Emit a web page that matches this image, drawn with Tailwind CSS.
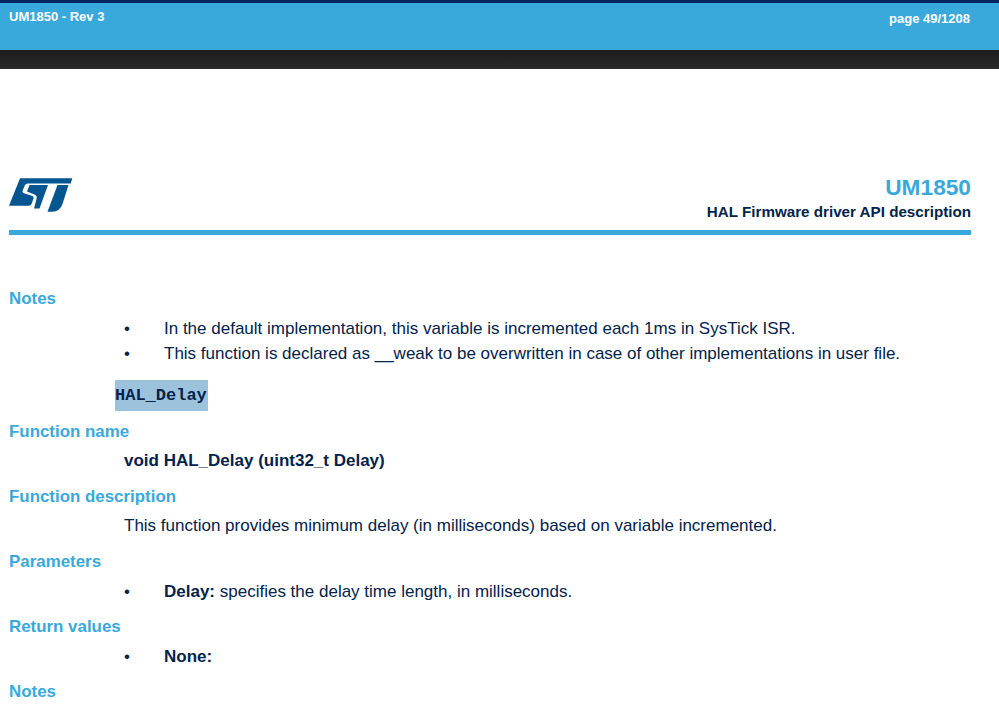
<!DOCTYPE html>
<html lang="en">
<head>
    <meta charset="UTF-8">
    <title>UM1850 - page 49</title>
    <script src="https://cdn.jsdelivr.net/npm/@tailwindcss/browser@4"></script>
</head>
<body class="bg-white font-['Liberation_Sans',Arial,sans-serif] text-[#03234b] overflow-hidden h-[710px]">

    <!-- Viewer header -->
    <header>
        <div class="h-[3px] bg-[#03265e]"></div>
        <div class="h-[47px] bg-[#39a9dc] flex justify-between items-start pt-[7px] pl-[9px] pr-[29px] text-white text-[13px] font-bold leading-[14px]">
            <span>UM1850 - Rev 3</span>
            <span class="mt-[2px]">page 49/1208</span>
        </div>
        <div class="h-[19px] bg-gradient-to-b from-[#1c1c1c] to-[#2b2b2b]"></div>
    </header>

    <!-- Page -->
    <main class="pl-[9px] pr-[28px]">
        <div class="flex justify-between items-start mt-[106px] h-[55px]">
            <svg class="w-[64px] h-[34px] mt-[3px]" viewBox="9 178 64 34">
                <path fill="#03568f" d="M20 178.3H72.3L70.7 183.6H28Q25.5 183.6 24.5 186L22.5 191Q22 192.5 24 193.2L32.5 196Q34 196.5 33.5 198.5L31.5 204Q31 205.7 28.5 205.7H9Z"/>
                <path fill="#03568f" d="M29.5 185H48L39.5 208.5H34L36.5 199Q37.5 195.5 34.5 194.5L27 191.5Z"/>
                <path fill="#03568f" d="M57.5 185H68.5L62.5 204Q60 211.5 52 211.7H47.5Z"/>
            </svg>
            <div class="text-right">
                <div class="text-[22.7px] leading-[24px] font-bold text-[#39a9dc]">UM1850</div>
                <div class="text-[15.2px] leading-[18px] font-bold mt-[4px]">HAL Firmware driver API description</div>
            </div>
        </div>
        <div class="h-[5px] bg-[#39a9dc]"></div>

        <section class="mt-[54px]">
            <h2 class="text-[16.9px] leading-5 font-bold text-[#39a9dc]">Notes</h2>
            <ul class="mt-[7px] ml-[115px] text-[17px] leading-[25px]">
                <li class="flex"><span class="w-[40px]">•</span>In the default implementation, this variable is incremented each 1ms in SysTick ISR.</li>
                <li class="flex"><span class="w-[40px]">•</span>This function is declared as __weak to be overwritten in case of other implementations in user file.</li>
            </ul>
        </section>

        <div class="mt-[14px] ml-[106px] w-[93px] h-[31px] bg-[#9dc3dc] flex items-center font-['Liberation_Mono',monospace] font-bold text-[17px]">HAL_Delay</div>

        <section class="mt-[11px]">
            <h2 class="text-[16.9px] leading-5 font-bold text-[#39a9dc]">Function name</h2>
            <p class="mt-[9px] ml-[115px] text-[17px] leading-5 font-bold">void HAL_Delay (uint32_t Delay)</p>
        </section>

        <section class="mt-[16px]">
            <h2 class="text-[16.9px] leading-5 font-bold text-[#39a9dc]">Function description</h2>
            <p class="mt-[9px] ml-[115px] text-[17px] leading-5">This function provides minimum delay (in milliseconds) based on variable incremented.</p>
        </section>

        <section class="mt-[16px]">
            <h2 class="text-[16.9px] leading-5 font-bold text-[#39a9dc]">Parameters</h2>
            <ul class="mt-[10px] ml-[115px] text-[17px] leading-5">
                <li class="flex"><span class="w-[40px]">•</span><span><b>Delay:</b> specifies the delay time length, in milliseconds.</span></li>
            </ul>
        </section>

        <section class="mt-[15px]">
            <h2 class="text-[16.9px] leading-5 font-bold text-[#39a9dc]">Return values</h2>
            <ul class="mt-[10px] ml-[115px] text-[17px] leading-5">
                <li class="flex"><span class="w-[40px]">•</span><b>None:</b></li>
            </ul>
        </section>

        <section class="mt-[15px]">
            <h2 class="text-[16.9px] leading-5 font-bold text-[#39a9dc]">Notes</h2>
        </section>
    </main>

</body>
</html>
